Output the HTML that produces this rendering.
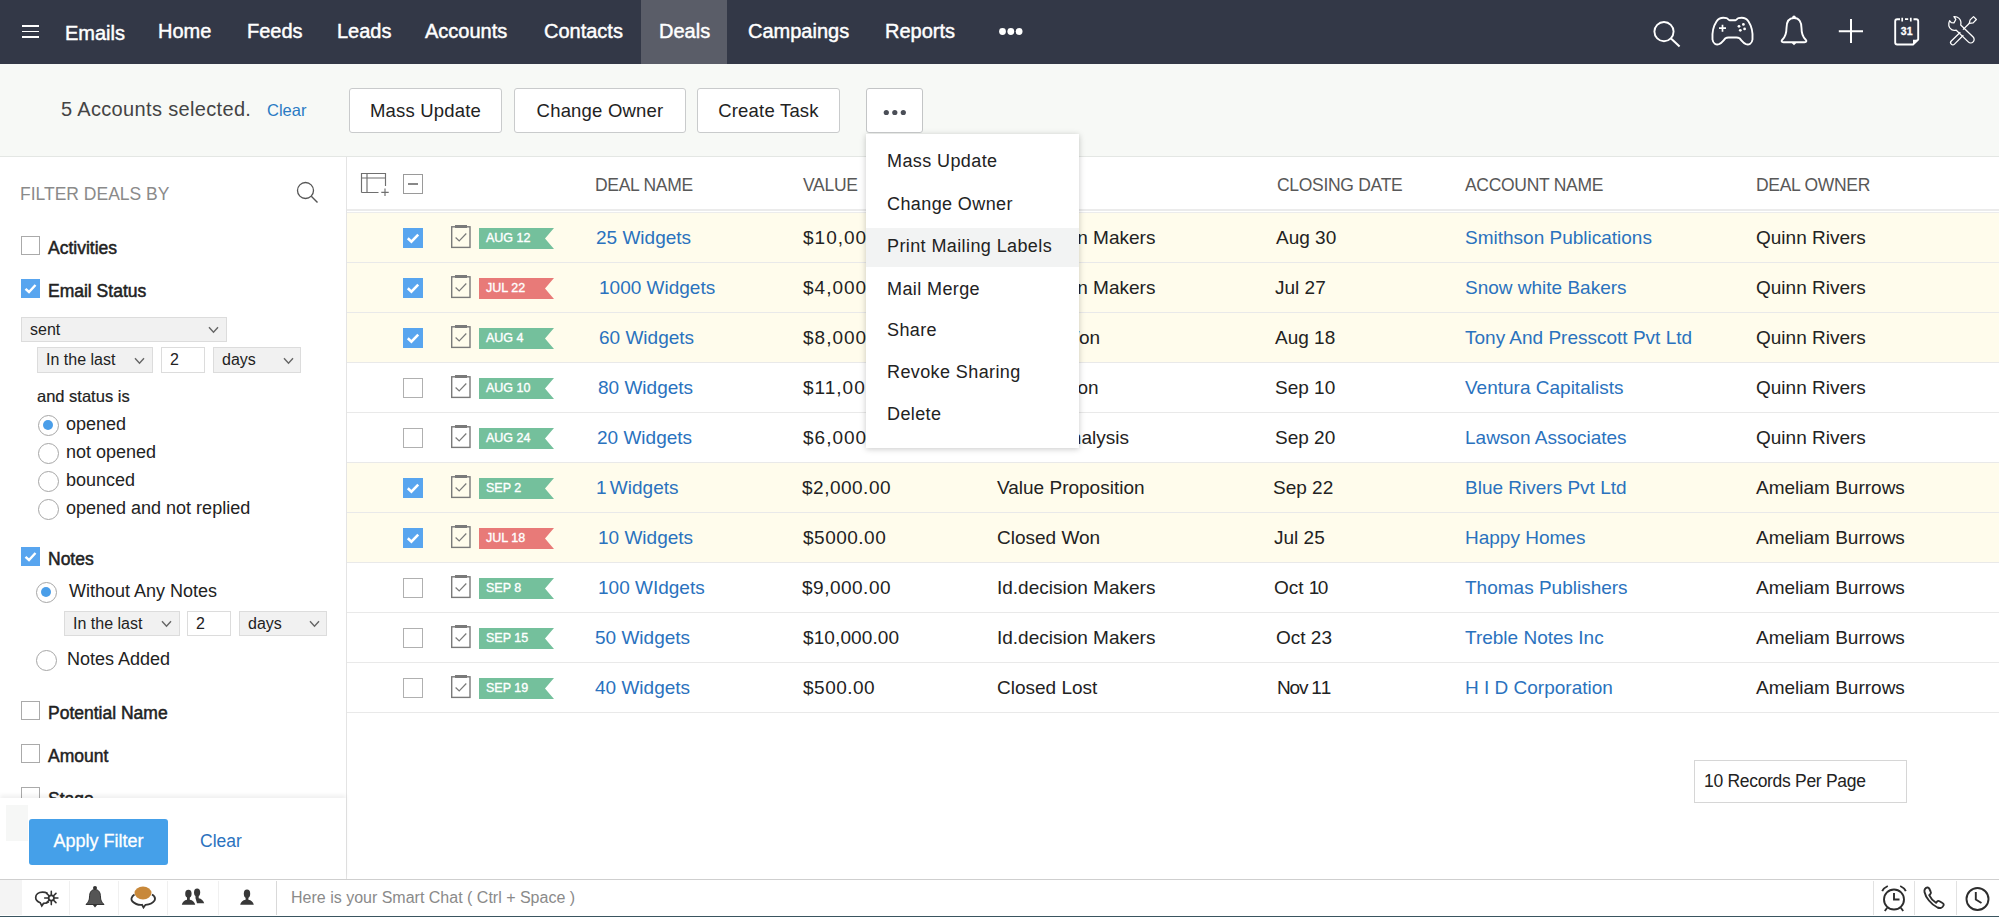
<!DOCTYPE html>
<html><head><meta charset="utf-8">
<style>
*{box-sizing:border-box;margin:0;padding:0}
html,body{width:1999px;height:917px;overflow:hidden;background:#fff;font-family:"Liberation Sans",sans-serif;color:#222}
.a{position:absolute;white-space:nowrap}
#nav{position:absolute;left:0;top:0;width:1999px;height:64px;background:#333847}
#nav .t{position:absolute;top:19px;font-size:20px;color:#fff;line-height:24px;-webkit-text-stroke:0.45px #fff}
#active{position:absolute;left:641px;top:0;width:86px;height:64px;background:#5a5d68}
#tb{position:absolute;left:0;top:64px;width:1999px;height:93px;background:#f7f9f6;border-bottom:1px solid #e4e7e4}
.btn{position:absolute;top:88px;height:45px;background:#fff;border:1px solid #c9cbcc;border-radius:3px;font-size:18.5px;line-height:43px;text-align:center;color:#222;letter-spacing:0.2px}
#side{position:absolute;left:0;top:157px;width:347px;height:722px;background:#fff;border-right:1px solid #e4e4e4}
.cb{position:absolute;width:19px;height:19px;border:1px solid #aaa;background:#fff}
.cbon{position:absolute;width:19px;height:19px;background:#58a5ef}
.lbl{position:absolute;font-size:17.5px;color:#222;line-height:20px;-webkit-text-stroke:0.5px #222}
.sel{position:absolute;background:#f1f1f1;border:1px solid #dcdcdc;font-size:16px;line-height:24px;color:#222;padding-left:8px}
.inp{position:absolute;background:#fff;border:1px solid #dcdcdc;font-size:16px;line-height:24px;color:#222;padding-left:8px}
.rad{position:absolute;width:21px;height:21px;border:1.2px solid #a6a6a6;border-radius:50%;background:#fff}
.rad.on::after{content:"";position:absolute;left:4.3px;top:4.3px;width:10px;height:10px;border-radius:50%;background:#4a9ee9}
.rl{position:absolute;font-size:18px;color:#222;line-height:20px}
.th{top:159px;line-height:52px;font-size:17.5px;color:#585858;letter-spacing:-0.3px}
.row{left:347px;width:1652px;height:50px}
.td{font-size:19px;line-height:50px;color:#222}
.lnk{color:#2a72be}
.flag{font-size:12.5px;color:#fff;line-height:21px;-webkit-text-stroke:0.35px #fff}
.mi{left:887px;font-size:18px;line-height:42px;color:#222;letter-spacing:0.4px}
.vs{top:881px;width:1px;height:34px;background:#f0f0f0}
</style></head><body>
<div id="nav">
  <div id="active"></div>
  <div class="a" style="left:22px;top:25px;width:17px;height:1.6px;background:#fff"></div>
  <div class="a" style="left:22px;top:30.7px;width:17px;height:1.6px;background:#fff"></div>
  <div class="a" style="left:22px;top:36.4px;width:17px;height:1.6px;background:#fff"></div>
  <div class="t" style="left:65px;top:21px">Emails</div>
  <div class="t" style="left:158px">Home</div>
  <div class="t" style="left:247px">Feeds</div>
  <div class="t" style="left:337px">Leads</div>
  <div class="t" style="left:425px">Accounts</div>
  <div class="t" style="left:544px">Contacts</div>
  <div class="t" style="left:659px">Deals</div>
  <div class="t" style="left:748px">Campaings</div>
  <div class="t" style="left:885px">Reports</div>
  <svg class="a" style="left:998px;top:27px" width="26" height="9" viewBox="0 0 26 9"><circle cx="4.5" cy="4.5" r="3.4" fill="#fff"/><circle cx="12.8" cy="4.5" r="3.4" fill="#fff"/><circle cx="21.1" cy="4.5" r="3.4" fill="#fff"/></svg>
</div>
<div id="tb"></div>
<div class="a" style="left:61px;top:98px;font-size:20px;color:#444;letter-spacing:0.34px">5 Accounts selected.</div>
<div class="a" style="left:267px;top:101px;font-size:16.5px;color:#2a7bc4">Clear</div>
<div class="btn" style="left:349px;width:153px">Mass Update</div>
<div class="btn" style="left:514px;width:172px">Change Owner</div>
<div class="btn" style="left:697px;width:143px">Create Task</div>

<div id="side">
</div>
<div class="a" style="left:20px;top:183px;font-size:17.5px;color:#8a8a8a;line-height:22px">FILTER DEALS BY</div>
<svg class="a" style="left:295px;top:180px" width="26" height="26" viewBox="0 0 26 26"><circle cx="10.5" cy="10.5" r="8" fill="none" stroke="#555" stroke-width="1.3"/><line x1="16.3" y1="16.3" x2="22.5" y2="22.5" stroke="#555" stroke-width="1.4"/></svg>
<div class="cb" style="left:21px;top:236px"></div>
<div class="lbl" style="left:48px;top:238px">Activities</div>
<div class="cbon" style="left:21px;top:279px"><svg width="19" height="19" viewBox="0 0 19 19"><path d="M4.5 9.8 L8 13 L14.5 6" fill="none" stroke="#fff" stroke-width="2.4"/></svg></div>
<div class="lbl" style="left:48px;top:281px">Email Status</div>
<div class="sel" style="left:21px;top:317px;width:206px;height:25px">sent</div>
<div class="sel" style="left:37px;top:347px;width:116px;height:26px">In the last</div>
<div class="inp" style="left:161px;top:347px;width:44px;height:26px">2</div>
<div class="sel" style="left:213px;top:347px;width:88px;height:26px">days</div>
<svg class="a" style="left:207.5px;top:325.5px" width="11" height="8" viewBox="0 0 11 8"><path d="M1 1.2 L5.5 6.2 L10 1.2" fill="none" stroke="#666" stroke-width="1.4"/></svg>
<svg class="a" style="left:134px;top:356.5px" width="11" height="8" viewBox="0 0 11 8"><path d="M1 1.2 L5.5 6.2 L10 1.2" fill="none" stroke="#666" stroke-width="1.4"/></svg>
<svg class="a" style="left:282.5px;top:356.5px" width="11" height="8" viewBox="0 0 11 8"><path d="M1 1.2 L5.5 6.2 L10 1.2" fill="none" stroke="#666" stroke-width="1.4"/></svg>
<div class="a" style="left:37px;top:387px;font-size:16.5px;color:#222;-webkit-text-stroke:0.2px #222">and status is</div>
<div class="rad on" style="left:37.5px;top:415px"></div><div class="rl" style="left:66px;top:414px">opened</div>
<div class="rad" style="left:37.5px;top:443px"></div><div class="rl" style="left:66px;top:442px">not opened</div>
<div class="rad" style="left:37.5px;top:471px"></div><div class="rl" style="left:66px;top:470px">bounced</div>
<div class="rad" style="left:37.5px;top:499px"></div><div class="rl" style="left:66px;top:498px">opened and not replied</div>
<div class="cbon" style="left:21px;top:547px"><svg width="19" height="19" viewBox="0 0 19 19"><path d="M4.5 9.8 L8 13 L14.5 6" fill="none" stroke="#fff" stroke-width="2.4"/></svg></div>
<div class="lbl" style="left:48px;top:549px">Notes</div>
<div class="rad on" style="left:35.5px;top:582px"></div><div class="rl" style="left:69px;top:581px">Without Any Notes</div>
<div class="sel" style="left:64px;top:611px;width:116px;height:25px">In the last</div>
<div class="inp" style="left:187px;top:611px;width:44px;height:25px">2</div>
<div class="sel" style="left:239px;top:611px;width:88px;height:25px">days</div>
<svg class="a" style="left:160.5px;top:620px" width="11" height="8" viewBox="0 0 11 8"><path d="M1 1.2 L5.5 6.2 L10 1.2" fill="none" stroke="#666" stroke-width="1.4"/></svg>
<svg class="a" style="left:309px;top:620px" width="11" height="8" viewBox="0 0 11 8"><path d="M1 1.2 L5.5 6.2 L10 1.2" fill="none" stroke="#666" stroke-width="1.4"/></svg>
<div class="rad" style="left:35.5px;top:650px"></div><div class="rl" style="left:67px;top:649px">Notes Added</div>
<div class="cb" style="left:21px;top:701px"></div>
<div class="lbl" style="left:48px;top:703px">Potential Name</div>
<div class="cb" style="left:21px;top:744px"></div>
<div class="lbl" style="left:48px;top:746px">Amount</div>
<div class="cb" style="left:21px;top:787px"></div>
<div class="lbl" style="left:48px;top:789px">Stage</div>
<div class="a" style="left:0;top:798px;width:346px;height:81px;background:#fff;box-shadow:0 -3px 4px rgba(0,0,0,0.06)"></div>
<div class="a" style="left:6px;top:805px;width:22px;height:36px;background:#f6f7f6"></div>
<div class="a" style="left:29px;top:819px;width:139px;height:46px;background:#45a0e9;border-radius:3px;color:#fff;font-size:18px;line-height:44px;text-align:center;-webkit-text-stroke:0.3px #fff">Apply Filter</div>
<div class="a" style="left:200px;top:831px;font-size:17.5px;color:#2a72be">Clear</div>

<div class="a" style="left:347px;top:157px;width:1652px;height:52px;background:#fff"></div>
<div class="a" style="left:347px;top:209px;width:1652px;height:2px;background:#ebebeb"></div>
<div class="a" style="left:347px;top:212px;width:1652px;height:1px;background:#ececec"></div>
<svg class="a" style="left:360px;top:172px" width="32" height="26" viewBox="0 0 32 26"><path d="M1.5 20.5 V1.5 H25.5 V14 M1.5 6 H25.5 M7 1.5 V20.5 M1.5 20.5 H18.5" fill="none" stroke="#6f6f6f" stroke-width="1.15"/><path d="M25 16.5 V24 M21.3 20.3 H28.7" stroke="#6f6f6f" stroke-width="1.15"/></svg>
<div class="a" style="left:403px;top:174px;width:20px;height:20px;border:1px solid #9a9a9a;background:#fff"><div style="position:absolute;left:4px;top:8px;width:10px;height:1.5px;background:#888"></div></div>
<div class="a th" style="left:595px">DEAL NAME</div>
<div class="a th" style="left:803px">VALUE</div>
<div class="a th" style="left:1277px">CLOSING DATE</div>
<div class="a th" style="left:1465px">ACCOUNT NAME</div>
<div class="a th" style="left:1756px">DEAL OWNER</div>
<div class="a row" style="top:213px;background:#fffcec"></div>
<div class="cbon" style="left:403px;top:228px;width:20px;height:20px"><svg width="20" height="20" viewBox="0 0 20 20"><path d="M4.8 10.3 L8.4 13.6 L15.2 6.6" fill="none" stroke="#fff" stroke-width="2.6"/></svg></div>
<svg class="a" style="left:450px;top:224px" width="22" height="25" viewBox="0 0 22 25"><rect x="1.7" y="2.8" width="18.3" height="20.6" fill="none" stroke="#7a7a7a" stroke-width="1.4"/><rect x="5" y="1" width="12" height="3" fill="#7a7a7a"/><path d="M5.6 13.5 L9.2 17 L16.3 9.5" fill="none" stroke="#7a7a7a" stroke-width="1.2"/></svg>
<svg class="a" style="left:479px;top:228px" width="75" height="21" viewBox="0 0 75 21"><path d="M0 0 H75 L66 10.5 L75 21 H0 Z" fill="#74c09c"/></svg>
<div class="a flag" style="left:486px;top:228px">AUG 12</div>
<div class="a td lnk" style="left:596px;top:213px">25 Widgets</div>
<div class="a td" style="left:803px;top:213px;letter-spacing:1px">$10,000.00</div>
<div class="a td" style="left:997px;top:213px">Id.decision Makers</div>
<div class="a td" style="left:1276px;top:213px">Aug 30</div>
<div class="a td lnk" style="left:1465px;top:213px">Smithson Publications</div>
<div class="a td" style="left:1756px;top:213px">Quinn Rivers</div>
<div class="a" style="left:347px;top:262px;width:1652px;height:1px;background:#e9e9e9"></div>
<div class="a row" style="top:263px;background:#fffcec"></div>
<div class="cbon" style="left:403px;top:278px;width:20px;height:20px"><svg width="20" height="20" viewBox="0 0 20 20"><path d="M4.8 10.3 L8.4 13.6 L15.2 6.6" fill="none" stroke="#fff" stroke-width="2.6"/></svg></div>
<svg class="a" style="left:450px;top:274px" width="22" height="25" viewBox="0 0 22 25"><rect x="1.7" y="2.8" width="18.3" height="20.6" fill="none" stroke="#7a7a7a" stroke-width="1.4"/><rect x="5" y="1" width="12" height="3" fill="#7a7a7a"/><path d="M5.6 13.5 L9.2 17 L16.3 9.5" fill="none" stroke="#7a7a7a" stroke-width="1.2"/></svg>
<svg class="a" style="left:479px;top:278px" width="75" height="21" viewBox="0 0 75 21"><path d="M0 0 H75 L66 10.5 L75 21 H0 Z" fill="#e87a78"/></svg>
<div class="a flag" style="left:486px;top:278px">JUL 22</div>
<div class="a td lnk" style="left:599px;top:263px">1000 Widgets</div>
<div class="a td" style="left:803px;top:263px;letter-spacing:1px">$4,000.00</div>
<div class="a td" style="left:997px;top:263px">Id.decision Makers</div>
<div class="a td" style="left:1275px;top:263px">Jul 27</div>
<div class="a td lnk" style="left:1465px;top:263px">Snow white Bakers</div>
<div class="a td" style="left:1756px;top:263px">Quinn Rivers</div>
<div class="a" style="left:347px;top:312px;width:1652px;height:1px;background:#e9e9e9"></div>
<div class="a row" style="top:313px;background:#fffcec"></div>
<div class="cbon" style="left:403px;top:328px;width:20px;height:20px"><svg width="20" height="20" viewBox="0 0 20 20"><path d="M4.8 10.3 L8.4 13.6 L15.2 6.6" fill="none" stroke="#fff" stroke-width="2.6"/></svg></div>
<svg class="a" style="left:450px;top:324px" width="22" height="25" viewBox="0 0 22 25"><rect x="1.7" y="2.8" width="18.3" height="20.6" fill="none" stroke="#7a7a7a" stroke-width="1.4"/><rect x="5" y="1" width="12" height="3" fill="#7a7a7a"/><path d="M5.6 13.5 L9.2 17 L16.3 9.5" fill="none" stroke="#7a7a7a" stroke-width="1.2"/></svg>
<svg class="a" style="left:479px;top:328px" width="75" height="21" viewBox="0 0 75 21"><path d="M0 0 H75 L66 10.5 L75 21 H0 Z" fill="#74c09c"/></svg>
<div class="a flag" style="left:486px;top:328px">AUG 4</div>
<div class="a td lnk" style="left:599px;top:313px">60 Widgets</div>
<div class="a td" style="left:803px;top:313px;letter-spacing:1px">$8,000.00</div>
<div class="a td" style="left:997px;top:313px">Closed Won</div>
<div class="a td" style="left:1275px;top:313px">Aug 18</div>
<div class="a td lnk" style="left:1465px;top:313px">Tony And Presscott Pvt Ltd</div>
<div class="a td" style="left:1756px;top:313px">Quinn Rivers</div>
<div class="a" style="left:347px;top:362px;width:1652px;height:1px;background:#e9e9e9"></div>
<div class="a row" style="top:363px;background:#fff"></div>
<div class="cb" style="left:403px;top:378px;width:20px;height:20px;border-color:#b0b0b0"></div>
<svg class="a" style="left:450px;top:374px" width="22" height="25" viewBox="0 0 22 25"><rect x="1.7" y="2.8" width="18.3" height="20.6" fill="none" stroke="#7a7a7a" stroke-width="1.4"/><rect x="5" y="1" width="12" height="3" fill="#7a7a7a"/><path d="M5.6 13.5 L9.2 17 L16.3 9.5" fill="none" stroke="#7a7a7a" stroke-width="1.2"/></svg>
<svg class="a" style="left:479px;top:378px" width="75" height="21" viewBox="0 0 75 21"><path d="M0 0 H75 L66 10.5 L75 21 H0 Z" fill="#74c09c"/></svg>
<div class="a flag" style="left:486px;top:378px">AUG 10</div>
<div class="a td lnk" style="left:598px;top:363px">80 Widgets</div>
<div class="a td" style="left:803px;top:363px;letter-spacing:1px">$11,000.00</div>
<div class="a td" style="left:994px;top:363px">Qualification</div>
<div class="a td" style="left:1275px;top:363px">Sep 10</div>
<div class="a td lnk" style="left:1465px;top:363px">Ventura Capitalists</div>
<div class="a td" style="left:1756px;top:363px">Quinn Rivers</div>
<div class="a" style="left:347px;top:412px;width:1652px;height:1px;background:#e9e9e9"></div>
<div class="a row" style="top:413px;background:#fff"></div>
<div class="cb" style="left:403px;top:428px;width:20px;height:20px;border-color:#b0b0b0"></div>
<svg class="a" style="left:450px;top:424px" width="22" height="25" viewBox="0 0 22 25"><rect x="1.7" y="2.8" width="18.3" height="20.6" fill="none" stroke="#7a7a7a" stroke-width="1.4"/><rect x="5" y="1" width="12" height="3" fill="#7a7a7a"/><path d="M5.6 13.5 L9.2 17 L16.3 9.5" fill="none" stroke="#7a7a7a" stroke-width="1.2"/></svg>
<svg class="a" style="left:479px;top:428px" width="75" height="21" viewBox="0 0 75 21"><path d="M0 0 H75 L66 10.5 L75 21 H0 Z" fill="#74c09c"/></svg>
<div class="a flag" style="left:486px;top:428px">AUG 24</div>
<div class="a td lnk" style="left:597px;top:413px">20 Widgets</div>
<div class="a td" style="left:803px;top:413px;letter-spacing:1px">$6,000.00</div>
<div class="a td" style="left:999px;top:413px">Needs Analysis</div>
<div class="a td" style="left:1275px;top:413px">Sep 20</div>
<div class="a td lnk" style="left:1465px;top:413px">Lawson Associates</div>
<div class="a td" style="left:1756px;top:413px">Quinn Rivers</div>
<div class="a" style="left:347px;top:462px;width:1652px;height:1px;background:#e9e9e9"></div>
<div class="a row" style="top:463px;background:#fffcec"></div>
<div class="cbon" style="left:403px;top:478px;width:20px;height:20px"><svg width="20" height="20" viewBox="0 0 20 20"><path d="M4.8 10.3 L8.4 13.6 L15.2 6.6" fill="none" stroke="#fff" stroke-width="2.6"/></svg></div>
<svg class="a" style="left:450px;top:474px" width="22" height="25" viewBox="0 0 22 25"><rect x="1.7" y="2.8" width="18.3" height="20.6" fill="none" stroke="#7a7a7a" stroke-width="1.4"/><rect x="5" y="1" width="12" height="3" fill="#7a7a7a"/><path d="M5.6 13.5 L9.2 17 L16.3 9.5" fill="none" stroke="#7a7a7a" stroke-width="1.2"/></svg>
<svg class="a" style="left:479px;top:478px" width="75" height="21" viewBox="0 0 75 21"><path d="M0 0 H75 L66 10.5 L75 21 H0 Z" fill="#74c09c"/></svg>
<div class="a flag" style="left:486px;top:478px">SEP 2</div>
<div class="a td lnk" style="left:596px;top:463px"><span style="letter-spacing:-2px">1</span> Widgets</div>
<div class="a td" style="left:802px;top:463px;letter-spacing:0.5px">$2,000.00</div>
<div class="a td" style="left:997px;top:463px">Value Proposition</div>
<div class="a td" style="left:1273px;top:463px">Sep 22</div>
<div class="a td lnk" style="left:1465px;top:463px">Blue Rivers Pvt Ltd</div>
<div class="a td" style="left:1756px;top:463px">Ameliam Burrows</div>
<div class="a" style="left:347px;top:512px;width:1652px;height:1px;background:#e9e9e9"></div>
<div class="a row" style="top:513px;background:#fffcec"></div>
<div class="cbon" style="left:403px;top:528px;width:20px;height:20px"><svg width="20" height="20" viewBox="0 0 20 20"><path d="M4.8 10.3 L8.4 13.6 L15.2 6.6" fill="none" stroke="#fff" stroke-width="2.6"/></svg></div>
<svg class="a" style="left:450px;top:524px" width="22" height="25" viewBox="0 0 22 25"><rect x="1.7" y="2.8" width="18.3" height="20.6" fill="none" stroke="#7a7a7a" stroke-width="1.4"/><rect x="5" y="1" width="12" height="3" fill="#7a7a7a"/><path d="M5.6 13.5 L9.2 17 L16.3 9.5" fill="none" stroke="#7a7a7a" stroke-width="1.2"/></svg>
<svg class="a" style="left:479px;top:528px" width="75" height="21" viewBox="0 0 75 21"><path d="M0 0 H75 L66 10.5 L75 21 H0 Z" fill="#e87a78"/></svg>
<div class="a flag" style="left:486px;top:528px">JUL 18</div>
<div class="a td lnk" style="left:598px;top:513px">10 Widgets</div>
<div class="a td" style="left:803px;top:513px;letter-spacing:0.5px">$5000.00</div>
<div class="a td" style="left:997px;top:513px">Closed Won</div>
<div class="a td" style="left:1274px;top:513px">Jul 25</div>
<div class="a td lnk" style="left:1465px;top:513px">Happy Homes</div>
<div class="a td" style="left:1756px;top:513px">Ameliam Burrows</div>
<div class="a" style="left:347px;top:562px;width:1652px;height:1px;background:#e9e9e9"></div>
<div class="a row" style="top:563px;background:#fff"></div>
<div class="cb" style="left:403px;top:578px;width:20px;height:20px;border-color:#b0b0b0"></div>
<svg class="a" style="left:450px;top:574px" width="22" height="25" viewBox="0 0 22 25"><rect x="1.7" y="2.8" width="18.3" height="20.6" fill="none" stroke="#7a7a7a" stroke-width="1.4"/><rect x="5" y="1" width="12" height="3" fill="#7a7a7a"/><path d="M5.6 13.5 L9.2 17 L16.3 9.5" fill="none" stroke="#7a7a7a" stroke-width="1.2"/></svg>
<svg class="a" style="left:479px;top:578px" width="75" height="21" viewBox="0 0 75 21"><path d="M0 0 H75 L66 10.5 L75 21 H0 Z" fill="#74c09c"/></svg>
<div class="a flag" style="left:486px;top:578px">SEP 8</div>
<div class="a td lnk" style="left:598px;top:563px">100 WIdgets</div>
<div class="a td" style="left:802px;top:563px;letter-spacing:0.5px">$9,000.00</div>
<div class="a td" style="left:997px;top:563px">Id.decision Makers</div>
<div class="a td" style="left:1274px;top:563px">Oct <span style="letter-spacing:-1.6px">1</span>0</div>
<div class="a td lnk" style="left:1465px;top:563px">Thomas Publishers</div>
<div class="a td" style="left:1756px;top:563px">Ameliam Burrows</div>
<div class="a" style="left:347px;top:612px;width:1652px;height:1px;background:#e9e9e9"></div>
<div class="a row" style="top:613px;background:#fff"></div>
<div class="cb" style="left:403px;top:628px;width:20px;height:20px;border-color:#b0b0b0"></div>
<svg class="a" style="left:450px;top:624px" width="22" height="25" viewBox="0 0 22 25"><rect x="1.7" y="2.8" width="18.3" height="20.6" fill="none" stroke="#7a7a7a" stroke-width="1.4"/><rect x="5" y="1" width="12" height="3" fill="#7a7a7a"/><path d="M5.6 13.5 L9.2 17 L16.3 9.5" fill="none" stroke="#7a7a7a" stroke-width="1.2"/></svg>
<svg class="a" style="left:479px;top:628px" width="75" height="21" viewBox="0 0 75 21"><path d="M0 0 H75 L66 10.5 L75 21 H0 Z" fill="#74c09c"/></svg>
<div class="a flag" style="left:486px;top:628px">SEP 15</div>
<div class="a td lnk" style="left:595px;top:613px">50 Widgets</div>
<div class="a td" style="left:803px;top:613px;letter-spacing:0.1px">$10,000.00</div>
<div class="a td" style="left:997px;top:613px">Id.decision Makers</div>
<div class="a td" style="left:1276px;top:613px">Oct 23</div>
<div class="a td lnk" style="left:1465px;top:613px">Treble Notes Inc</div>
<div class="a td" style="left:1756px;top:613px">Ameliam Burrows</div>
<div class="a" style="left:347px;top:662px;width:1652px;height:1px;background:#e9e9e9"></div>
<div class="a row" style="top:663px;background:#fff"></div>
<div class="cb" style="left:403px;top:678px;width:20px;height:20px;border-color:#b0b0b0"></div>
<svg class="a" style="left:450px;top:674px" width="22" height="25" viewBox="0 0 22 25"><rect x="1.7" y="2.8" width="18.3" height="20.6" fill="none" stroke="#7a7a7a" stroke-width="1.4"/><rect x="5" y="1" width="12" height="3" fill="#7a7a7a"/><path d="M5.6 13.5 L9.2 17 L16.3 9.5" fill="none" stroke="#7a7a7a" stroke-width="1.2"/></svg>
<svg class="a" style="left:479px;top:678px" width="75" height="21" viewBox="0 0 75 21"><path d="M0 0 H75 L66 10.5 L75 21 H0 Z" fill="#74c09c"/></svg>
<div class="a flag" style="left:486px;top:678px">SEP 19</div>
<div class="a td lnk" style="left:595px;top:663px">40 Widgets</div>
<div class="a td" style="left:803px;top:663px;letter-spacing:0.5px">$500.00</div>
<div class="a td" style="left:997px;top:663px">Closed Lost</div>
<div class="a td" style="left:1277px;top:663px" ><span style="letter-spacing:-1.2px">Nov 1</span>1</div>
<div class="a td lnk" style="left:1465px;top:663px">H I D Corporation</div>
<div class="a td" style="left:1756px;top:663px">Ameliam Burrows</div>
<div class="a" style="left:347px;top:712px;width:1652px;height:1px;background:#e9e9e9"></div>

<!-- dropdown menu -->
<div class="a" style="left:866px;top:134px;width:213px;height:314px;background:#fff;box-shadow:0 1px 6px rgba(0,0,0,0.22)"></div>
<div class="a" style="left:866px;top:228px;width:213px;height:39px;background:#f2f3f3"></div>
<div class="a mi" style="top:140px">Mass Update</div>
<div class="a mi" style="top:183px">Change Owner</div>
<div class="a mi" style="top:225px">Print Mailing Labels</div>
<div class="a mi" style="top:268px">Mail Merge</div>
<div class="a mi" style="top:309px">Share</div>
<div class="a mi" style="top:351px">Revoke Sharing</div>
<div class="a mi" style="top:393px">Delete</div>
<div class="btn" style="left:866px;top:88px;width:57px;height:45px;border-color:#c3c5c6"><svg style="position:absolute;left:16px;top:20px" width="24" height="7" viewBox="0 0 24 7"><circle cx="3.3" cy="3.5" r="2.6" fill="#4a4e57"/><circle cx="11.8" cy="3.5" r="2.6" fill="#4a4e57"/><circle cx="20.3" cy="3.5" r="2.6" fill="#4a4e57"/></svg></div>

<!-- records per page -->
<div class="a" style="left:1694px;top:760px;width:213px;height:43px;border:1px solid #d6d6d6;background:#fff"></div>
<div class="a" style="left:1704px;top:770px;font-size:17.5px;line-height:22px;color:#222;letter-spacing:-0.3px">10 Records Per Page</div>

<!-- bottom bar -->
<div class="a" style="left:0;top:879px;width:1999px;height:38px;background:#fff;border-top:1px solid #cfcfcf"></div>
<div class="a" style="left:0;top:880px;width:22px;height:35px;background:#f4f4f4"></div>
<div class="a" style="left:0;top:915.6px;width:1999px;height:1.4px;background:#3a5560"></div>
<div class="a vs" style="left:69px"></div>
<div class="a vs" style="left:118px"></div>
<div class="a vs" style="left:167px"></div>
<div class="a vs" style="left:218px"></div>
<div class="a vs" style="left:276px;background:#d9d9d9"></div>
<div class="a vs" style="left:1873px;background:#e2e2e2"></div>
<div class="a vs" style="left:1914px;background:#e2e2e2"></div>
<div class="a vs" style="left:1956px;background:#e2e2e2"></div>
<div class="a" style="left:291px;top:887px;font-size:16px;line-height:22px;color:#8a8a8a">Here is your Smart Chat ( Ctrl + Space )</div>


<!-- nav icons -->
<svg class="a" style="left:1640px;top:10px" width="50" height="45" viewBox="1640 10 50 45"><circle cx="1664" cy="31.6" r="9.6" fill="none" stroke="#fff" stroke-width="1.9"/><line x1="1671" y1="38.6" x2="1679.6" y2="46.6" stroke="#fff" stroke-width="2"/></svg>
<svg class="a" style="left:1709px;top:14px" width="48" height="34" viewBox="-3 -3 48 34"><path d="M14.5 1.2 C10.5 0.2 6.5 1.5 4.5 4.5 C1.5 9 0 16 0.5 22.5 C1 26.5 4 28.2 7 27.2 C9.5 26.3 11.5 23.2 13.5 21.3 C14.5 20.6 15.5 20.5 16.5 20.5 H24.5 C25.5 20.5 26.5 20.6 27.5 21.3 C29.5 23.2 31.5 26.3 34 27.2 C37 28.2 40 26.5 40.5 22.5 C41 16 39.5 9 36.5 4.5 C34.5 1.5 30.5 0.2 26.5 1.2 C25 1.6 24.5 3.2 23.5 3.2 H17.5 C16.5 3.2 16 1.6 14.5 1.2 Z" fill="none" stroke="#fff" stroke-width="1.9" stroke-linejoin="round"/><path d="M7 11.2 H14 M10.5 7.7 V14.7" stroke="#fff" stroke-width="1.7"/><circle cx="27" cy="9.3" r="1.4" fill="#fff"/><circle cx="31.4" cy="7.4" r="1.4" fill="#fff"/><circle cx="32.6" cy="11.9" r="1.4" fill="#fff"/><circle cx="28.3" cy="13.3" r="1.4" fill="#fff"/></svg>
<svg class="a" style="left:1778px;top:14px" width="32" height="34" viewBox="0 0 32 34"><path d="M16 4 C10.5 4 8.5 8.5 8.5 14 C8.5 20 7.5 22.5 4.5 25.5 C3 27 3.5 28.2 5.5 28.2 H26.5 C28.5 28.2 29 27 27.5 25.5 C24.5 22.5 23.5 20 23.5 14 C23.5 8.5 21.5 4 16 4 Z" fill="none" stroke="#fff" stroke-width="1.9" stroke-linejoin="round"/><circle cx="16" cy="3.3" r="1.8" fill="#fff"/><path d="M13.3 28.5 L16 31.3 L18.7 28.5 Z" fill="#fff"/></svg>
<svg class="a" style="left:1836px;top:17px" width="30" height="28" viewBox="0 0 30 28"><path d="M2.8 14.2 H27 M15 2 V26" stroke="#fff" stroke-width="2"/></svg>
<svg class="a" style="left:1892px;top:16px" width="30" height="32" viewBox="0 0 30 32"><path d="M8 3.2 H5.2 C4 3.2 3.2 4 3.2 5.2 V26.5 C3.2 27.7 4 28.5 5.2 28.5 H21 L26.2 23.5 V5.2 C26.2 4 25.4 3.2 24.2 3.2 H21.5" fill="none" stroke="#fff" stroke-width="1.9" stroke-linejoin="round"/><path d="M21 28.5 V23.8 H26.2 Z" fill="#fff"/><path d="M10.2 1.8 V5.6 M18.8 1.8 V5.6 M13 3.2 H16.2" stroke="#fff" stroke-width="1.7"/><text x="14.7" y="18.8" text-anchor="middle" font-family="Liberation Sans" font-weight="bold" font-size="10.5" fill="#fff" stroke="#fff" stroke-width="0.3">31</text></svg>
<svg class="a" style="left:1945.5px;top:13.5px" width="33" height="33" viewBox="-2 -2 35 35"><path d="M1.8 5.2 C0 8.8 0.8 12.8 4 14.6 C5.6 15.4 7.2 15.4 8.6 15 L21.6 27.6 C23 29 25.4 29 26.8 27.6 C28.2 26.2 28.2 23.8 26.8 22.4 L13.6 9.6 C14.2 7 13.6 4.2 11.6 2.4 C10 1 8 0.6 6.4 0.8 L8.4 3.8 L6.4 7.4 L3.6 7.2 Z" fill="none" stroke="#fff" stroke-width="1.35" stroke-linejoin="round"/><path d="M16 14.6 L22.6 8 M13.2 17.4 L3.6 26.6 C2.6 27.6 2.6 29 3.6 30 C4.6 31 6 31 7 30 L16.4 20.6" fill="none" stroke="#fff" stroke-width="1.35" stroke-linejoin="round"/><path d="M22.6 8 L23.6 4.2 L27.2 0.8 L30.2 3.8 L26.8 7.4 Z" fill="none" stroke="#fff" stroke-width="1.35" stroke-linejoin="round"/></svg>

<!-- bottom icons -->
<svg class="a" style="left:33px;top:886px" width="30" height="24" viewBox="0 0 30 24"><path d="M14.5 7.2 C13 6.5 11.5 6.2 9.5 6.2 C5.5 6.2 2.7 8.5 2.7 11.6 C2.7 14 4.5 15.8 7.2 16.7 L8.8 19.8 L10.5 17.4 C12.5 17.4 14.5 16.8 15.8 15.8" fill="none" stroke="#333" stroke-width="1.7"/><circle cx="18.30" cy="12.00" r="3.6" fill="#333"/><circle cx="18.30" cy="12.00" r="1.8" fill="#fff"/><path d="M21.50 12.00 L24.90 12.00 M20.56 14.26 L22.97 16.67 M18.30 15.20 L18.30 18.60 M16.04 14.26 L13.63 16.67 M15.10 12.00 L11.70 12.00 M16.04 9.74 L13.63 7.33 M18.30 8.80 L18.30 5.40 M20.56 9.74 L22.97 7.33" stroke="#333" stroke-width="1.6" stroke-linecap="round"/></svg>
<svg class="a" style="left:84px;top:885px" width="22" height="24" viewBox="0 0 22 24"><circle cx="11" cy="3" r="2" fill="#333"/><path d="M11 4.5 C7 4.5 5.5 8 5.5 12 C5.5 15 4.5 17 2 19.5 H20 C17.5 17 16.5 15 16.5 12 C16.5 8 15 4.5 11 4.5 Z" fill="#555" stroke="#333" stroke-width="1"/><path d="M8.5 19.5 L11 22.5 L13.5 19.5 Z" fill="#333"/></svg>
<svg class="a" style="left:129px;top:885px" width="28" height="24" viewBox="0 0 28 24"><ellipse cx="14" cy="8" rx="8.5" ry="6.5" fill="#c8883a"/><path d="M5.5 9.5 C2.5 11.5 1.5 14.5 3.5 16.5 C6 19 10 20 13 19.8 L14.5 22.5 L16.5 19.8 C20 19.5 24 18 25.5 15.5 C26.5 13.5 25.5 11 23 9.5" fill="none" stroke="#333" stroke-width="1.8"/></svg>
<svg class="a" style="left:180px;top:886px" width="26" height="22" viewBox="0 0 26 22"><ellipse cx="17.1" cy="6.4" rx="3.1" ry="4" fill="#383838"/><path d="M15.5 10 H18.7 V12.3 C21.3 12.8 23.6 14.6 24.2 17.3 H17 L15.5 12.3 Z" fill="#383838"/><ellipse cx="8.4" cy="7.8" rx="3.2" ry="4.1" fill="#383838"/><path d="M7 11 H9.8 V13.8 C12.6 14.2 14.8 16.2 15.2 18.8 H1.8 C2.2 16.2 4.4 14.2 7 13.8 Z" fill="#383838"/></svg>
<svg class="a" style="left:238px;top:886px" width="18" height="22" viewBox="0 0 18 22"><ellipse cx="9" cy="7.8" rx="3.2" ry="4.2" fill="#383838"/><path d="M7.6 11 H10.4 V13.8 C13.2 14.2 15.4 16.2 15.8 18.8 H2.2 C2.6 16.2 4.8 14.2 7.6 13.8 Z" fill="#383838"/></svg>
<svg class="a" style="left:1879px;top:884px" width="30" height="30" viewBox="0 0 30 30"><circle cx="15" cy="15.5" r="10" fill="none" stroke="#2d2d2d" stroke-width="1.9"/><path d="M15 9 V15.5 H20.5" fill="none" stroke="#2d2d2d" stroke-width="1.9"/><path d="M3.2 7.2 Q4.8 3.8 8.8 2 M26.8 7.2 Q25.2 3.8 21.2 2 M8.2 23.8 L5.8 27 M21.8 23.8 L24.2 27" fill="none" stroke="#2d2d2d" stroke-width="1.9"/></svg>
<svg class="a" style="left:1922px;top:885px" width="26" height="26" viewBox="0 0 26 26"><path d="M5.5 2.5 C3.5 2.8 2 4.5 2.5 7 C3.5 12 9 19.5 15.5 22.5 C18 23.5 20.5 23 21.5 20.5 C22 19.5 21.5 18.5 20.5 18 L17.5 16.2 C16.5 15.6 15.5 16 14.8 16.8 L14 17.8 C11 16 8.5 13 7.2 10.2 L8.2 9.3 C9 8.5 9.2 7.5 8.6 6.5 L7.2 3.5 C6.8 2.8 6.2 2.4 5.5 2.5 Z" fill="none" stroke="#2d2d2d" stroke-width="1.9" stroke-linejoin="round"/></svg>
<svg class="a" style="left:1963px;top:885px" width="30" height="30" viewBox="0 0 30 30"><circle cx="14.5" cy="14" r="11" fill="none" stroke="#2d2d2d" stroke-width="1.9"/><path d="M12.8 7 V14.5 L18.5 18" fill="none" stroke="#2d2d2d" stroke-width="1.9"/></svg>

</body></html>
